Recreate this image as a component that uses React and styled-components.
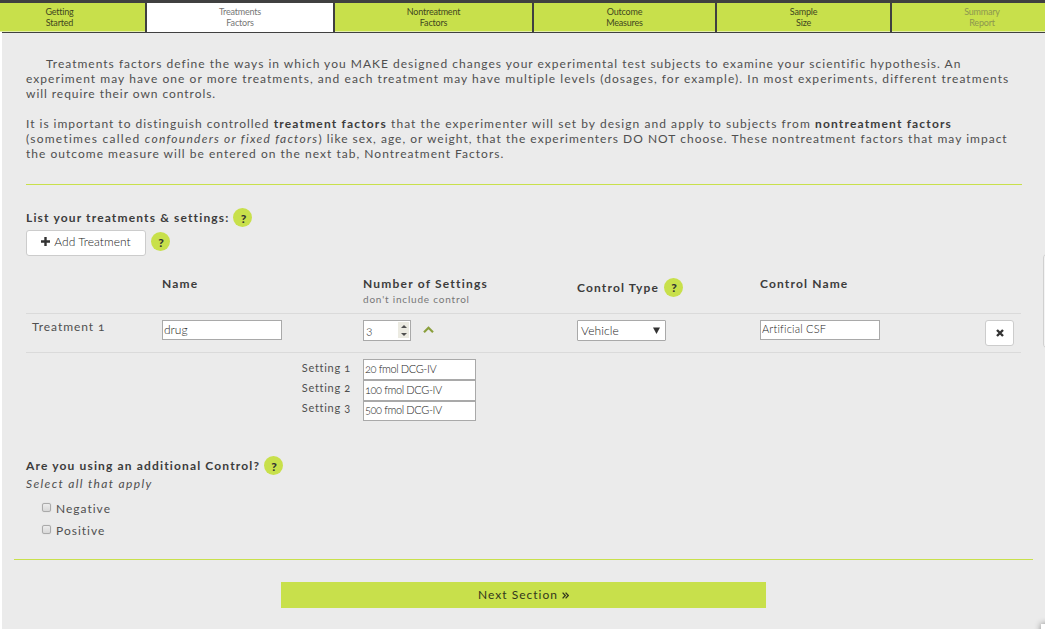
import React from "react";
import styled, { createGlobalStyle } from "styled-components";

const GlobalStyle = createGlobalStyle`
  * { box-sizing: border-box; }
  html, body { margin: 0; height: 100%; overflow: hidden; background: #fff; }
  body, input, button { font-family: Lato, "Open Sans", sans-serif; font-variant-numeric: oldstyle-nums; }
  body { font-size: 12px; color: #4f4f4f; }
`;

const Page = styled.div`
  position: relative;
  width: 1045px;
  height: 629px;
  overflow: hidden;
`;

const TabBar = styled.nav`
  display: grid;
  grid-template-columns: 145px 186px 197px 181px 173px 153px;
  column-gap: 2px;
  height: 32px;
  padding-top: 3px;
  background: #404040;
`;

const Tab = styled.div`
  display: flex;
  flex-direction: column;
  align-items: center;
  height: 29px;
  padding-top: 3px;
  padding-right: ${(p) => p.$shift || 0}px;
  padding-left: ${(p) => p.$indent || 0}px;
  border-bottom: 1px solid ${(p) => (p.$active ? "#fff" : "#e4efab")};
  background: ${(p) => (p.$active ? "#fff" : "#c8e04b")};
  color: ${(p) => (p.$active ? "#777" : p.$disabled ? "#8d974f" : "#42471f")};
  font-size: 9px;
  line-height: 11px;
  letter-spacing: -0.2px;
`;

const Content = styled.main`
  height: 597px;
  margin-left: 2px;
  padding: 23px 12px 0 24px;
  border-top: 1px solid #404040;
  background: #ebebeb;
`;

const Paragraph = styled.div`
  margin-bottom: 15px;
`;

const Text = styled.span`
  display: block;
  width: max-content;
  white-space: pre;
  font-size: ${(p) => p.$size || 12}px;
  line-height: ${(p) => p.$line || 15}px;
  letter-spacing: ${(p) => p.$track ?? (p.$bold ? 1.15 : 1)}px;
  font-weight: ${(p) => (p.$bold ? 700 : p.$light ? 300 : 400)};
  font-style: ${(p) => (p.$italic ? "italic" : "normal")};
  color: ${(p) => p.$color || "inherit"};
  margin: ${(p) => -(p.$up || 0)}px 0 ${(p) => p.$up || 0}px ${(p) => p.$indent || 0}px;
  b { color: #3c3c3c; letter-spacing: 1.17px; }
  i { letter-spacing: 1.26px; }
`;

const Track = styled.span`
  letter-spacing: ${(p) => p.$track}px;
`;

const Rule = styled.hr`
  width: ${(p) => p.$width}px;
  height: 1px;
  margin: ${(p) => p.$margin};
  border: 0;
  background: #c8e04b;
`;

const HeadingRow = styled.div`
  display: flex;
  align-items: center;
  gap: ${(p) => p.$gap || 4}px;
  height: ${(p) => p.$height || 19}px;
  color: #3c3c3c;
`;

const HelpBadge = styled.span`
  display: flex;
  align-items: center;
  justify-content: center;
  flex: none;
  width: 19px;
  height: 19px;
  padding: 1px 0 0 1px;
  border-radius: 50%;
  background: #c8e04b;
  color: #333;
  font-size: 12px;
  font-weight: 900;
  line-height: 17px;
`;

const AddRow = styled.div`
  display: flex;
  align-items: flex-start;
  gap: 5px;
  height: 29px;
  padding-top: 3px;
  ${HelpBadge} { margin-top: 2px; }
`;

const WhiteButton = styled.button`
  display: flex;
  align-items: center;
  justify-content: center;
  gap: 4px;
  width: ${(p) => p.$width}px;
  height: 26px;
  padding: 0 0 ${(p) => p.$lift || 0}px;
  border: 1px solid #ccc;
  border-radius: 3px;
  background: #fff;
  color: #222;
`;

const columns = "136px 201px 214px 183px 225px 36px";

const TableHead = styled.div`
  display: grid;
  grid-template-columns: ${columns};
  width: 995px;
  height: 57px;
  padding-top: 20px;
  color: #3c3c3c;
`;

const TableRow = styled.div`
  display: grid;
  grid-template-columns: ${columns};
  align-items: start;
  width: 995px;
  height: 40px;
  padding-top: 6px;
  border-top: 1px solid #dadada;
  border-bottom: 1px solid #dadada;
`;

const Field = styled.input`
  display: block;
  width: ${(p) => p.$width}px;
  height: ${(p) => p.$height || 20}px;
  margin: 0;
  padding: 0 1px ${(p) => p.$lift ?? 2}px;
  border: 1px solid #a9a9a9;
  border-radius: 0;
  outline: 0;
  background: #fff;
  color: #222;
  font-size: ${(p) => p.$size || 11}px;
  font-weight: 300;
  letter-spacing: ${(p) => p.$track || 0}px;
`;

const CountCell = styled.div`
  display: flex;
  gap: 12px;
`;

const Stepper = styled.div`
  display: flex;
  justify-content: space-between;
  width: 48px;
  height: 21px;
  padding: 1px 1px 1px 2px;
  border: 1px solid #a9a9a9;
  background: #fff;
  color: #222;
  line-height: 17px;
  font-size: 12px;
  font-weight: 300;
`;

const Arrows = styled.span`
  display: flex;
  flex-direction: column;
  align-items: center;
  justify-content: space-between;
  width: 11px;
  height: 16px;
  padding: 3px 0 2px;
  background: #ecebe2;
`;

const Triangle = styled.i`
  border: 3px solid transparent;
  border-top: ${(p) => (p.$down ? "3px solid #505050" : "0")};
  border-bottom: ${(p) => (p.$down ? "0" : "3px solid #505050")};
`;

const Select = styled.div`
  display: flex;
  align-items: center;
  justify-content: space-between;
  width: 89px;
  height: 21px;
  padding: 0 5px 1px 3px;
  border: 1px solid #a9a9a9;
  border-radius: 1px;
  background: #fff;
`;

const Settings = styled.div`
  display: grid;
  grid-template-columns: 325px 113px;
  column-gap: 12px;
  height: 62px;
  margin: 6px 0 35px;
`;

const SettingLabels = styled.div`
  display: flex;
  flex-direction: column;
  align-items: flex-end;
`;

const Options = styled.div`
  margin-top: 4px;
`;

const Option = styled.label`
  display: flex;
  align-items: center;
  gap: 5px;
  height: 22px;
  padding-left: 16px;
`;

const Checkbox = styled.span`
  width: 9px;
  height: 9px;
  margin-bottom: 3px;
  border: 1px solid #aaa;
  border-radius: 2px;
  background: linear-gradient(#ececec, #d8d8d8);
  box-shadow: 0 0 1px #bbb;
`;

const NextButton = styled.button`
  display: flex;
  align-items: center;
  justify-content: center;
  gap: 4px;
  width: 485px;
  height: 26px;
  margin: 22px 0 0 255px;
  padding: 0;
  border: 0;
  background: #c8e04b;
  color: #33371c;
`;

const SideHandle = styled.div`
  position: absolute;
  top: 253px;
  right: -8px;
  width: 10px;
  height: 96px;
  border: 1px solid #d0d0d0;
  border-radius: 5px;
  background: #f4f4f4;
`;

const CornerPanel = styled.div`
  position: absolute;
  top: 624px;
  left: 1041px;
  width: 20px;
  height: 20px;
  background: #fff;
  box-shadow: 0 0 6px rgba(0, 0, 0, 0.45);
`;

const tabs = [
  { a: "Getting", b: "Started", shift: 26 },
  { a: "Treatments", b: "Factors", active: true },
  { a: "Nontreatment", b: "Factors" },
  { a: "Outcome", b: "Measures" },
  { a: "Sample", b: "Size" },
  { a: "Summary", b: "Report", disabled: true, indent: 27 },
];

const settings = [
  { value: "20 fmol DCG-IV", height: 21 },
  { value: "100 fmol DCG-IV", height: 21 },
  { value: "500 fmol DCG-IV", height: 20 },
];

const Help = () => <HelpBadge>?</HelpBadge>;

export default function App() {
  return (
    <Page>
      <GlobalStyle />
      <TabBar>
        {tabs.map((t) => (
          <Tab key={t.a} $active={t.active} $disabled={t.disabled} $shift={t.shift} $indent={t.indent}>
            <span>{t.a}</span>
            <span>{t.b}</span>
          </Tab>
        ))}
      </TabBar>
      <Content>
        <Paragraph>
          <Text $indent={20} $track={1.007}>Treatments factors define the ways in which you MAKE designed changes your experimental test subjects to examine your scientific hypothesis. An</Text>
          <Text $track={1.053}>experiment may have one or more treatments, and each treatment may have multiple levels (dosages, for example). In most experiments, different treatments</Text>
          <Text $track={0.95}>will require their own controls.</Text>
        </Paragraph>
        <Paragraph>
          <Text $track={1.055}><Track $track={0.985}>It is important to distinguish controlled </Track><b>treatment factors</b> that the experimenter will set by design and apply to subjects from <b>nontreatment factors</b></Text>
          <Text $track={1.012}><Track $track={1.25}>(sometimes called </Track><i>confounders or fixed factors</i>) like sex, age, or weight, that the experimenters DO NOT choose. These nontreatment factors that may impact</Text>
          <Text $track={1.02}>the outcome measure will be entered on the next tab, Nontreatment Factors.</Text>
        </Paragraph>
        <Rule $width={996} $margin="23px 0 23px" />
        <HeadingRow>
          <Text $bold>List your treatments &amp; settings:</Text>
          <Help />
        </HeadingRow>
        <AddRow>
          <WhiteButton $width={120} $lift={3}>
            <svg width="9" height="9" viewBox="0 0 9 9"><path d="M4.5 0v9M0 4.5h9" stroke="#333" strokeWidth="2.4" /></svg>
            <Text $light $track={0.05}>Add Treatment</Text>
          </WhiteButton>
          <Help />
        </AddRow>
        <TableHead>
          <span />
          <Text $bold>Name</Text>
          <div>
            <Text $bold $track={1.2}>Number of Settings</Text>
            <Text $size={10} $line={17} $track={0.8} $color="#777">don't include control</Text>
          </div>
          <HeadingRow $height={22} $gap={5}>
            <Text $bold>Control Type</Text>
            <Help />
          </HeadingRow>
          <Text $bold>Control Name</Text>
        </TableHead>
        <TableRow>
          <Text $indent={6} $up={1} $track={0.95}>Treatment 1</Text>
          <Field $width={120} $size={12} defaultValue="drug" />
          <CountCell>
            <Stepper>
              3
              <Arrows>
                <Triangle />
                <Triangle $down />
              </Arrows>
            </Stepper>
            <svg width="11" height="20" viewBox="0 0 11 20"><path d="M1 12.2L5.5 7.8L10 12.2" fill="none" stroke="#8a9f3c" strokeWidth="2.2" /></svg>
          </CountCell>
          <Select>
            <Text $light $track={0.12} $color="#222">Vehicle</Text>
            <svg width="7" height="7" viewBox="0 0 7 7"><path d="M0 0.5h7L3.5 7z" fill="#333" /></svg>
          </Select>
          <Field $width={120} $lift={3} $track={0.2} defaultValue="Artificial CSF" />
          <WhiteButton $width={29} aria-label="Remove">
            <svg width="8" height="8" viewBox="0 0 8 8"><path d="M1 1l6 6M7 1l-6 6" stroke="#333" strokeWidth="2.4" /></svg>
          </WhiteButton>
        </TableRow>
        <Settings>
          <SettingLabels>
            {[1, 2, 3].map((n) => (
              <Text key={n} $size={11} $line={20} $up={1} $track={0.7}>Setting {n}</Text>
            ))}
          </SettingLabels>
          <div>
            {settings.map((s) => (
              <Field key={s.value} $width={113} $height={s.height} $lift={3} $track={-0.4} defaultValue={s.value} />
            ))}
          </div>
        </Settings>
        <HeadingRow>
          <Text $bold>Are you using an additional Control?</Text>
          <Help />
        </HeadingRow>
        <Text $italic $line={20} $up={1} $track={1.36}>Select all that apply</Text>
        <Options>
          <Option><Checkbox /><Text $up={1}>Negative</Text></Option>
          <Option><Checkbox /><Text $up={1}>Positive</Text></Option>
        </Options>
        <Rule $width={1019} $margin="17px 0 0 -12px" />
        <NextButton>
          <Text $up={1}>Next Section</Text>
          <svg width="7" height="7" viewBox="0 0 7 7"><path d="M0.6 0.6L3.3 3.5L0.6 6.4M3.6 0.6L6.3 3.5L3.6 6.4" fill="none" stroke="#33371c" strokeWidth="1.3" /></svg>
        </NextButton>
      </Content>
      <SideHandle />
      <CornerPanel />
    </Page>
  );
}
